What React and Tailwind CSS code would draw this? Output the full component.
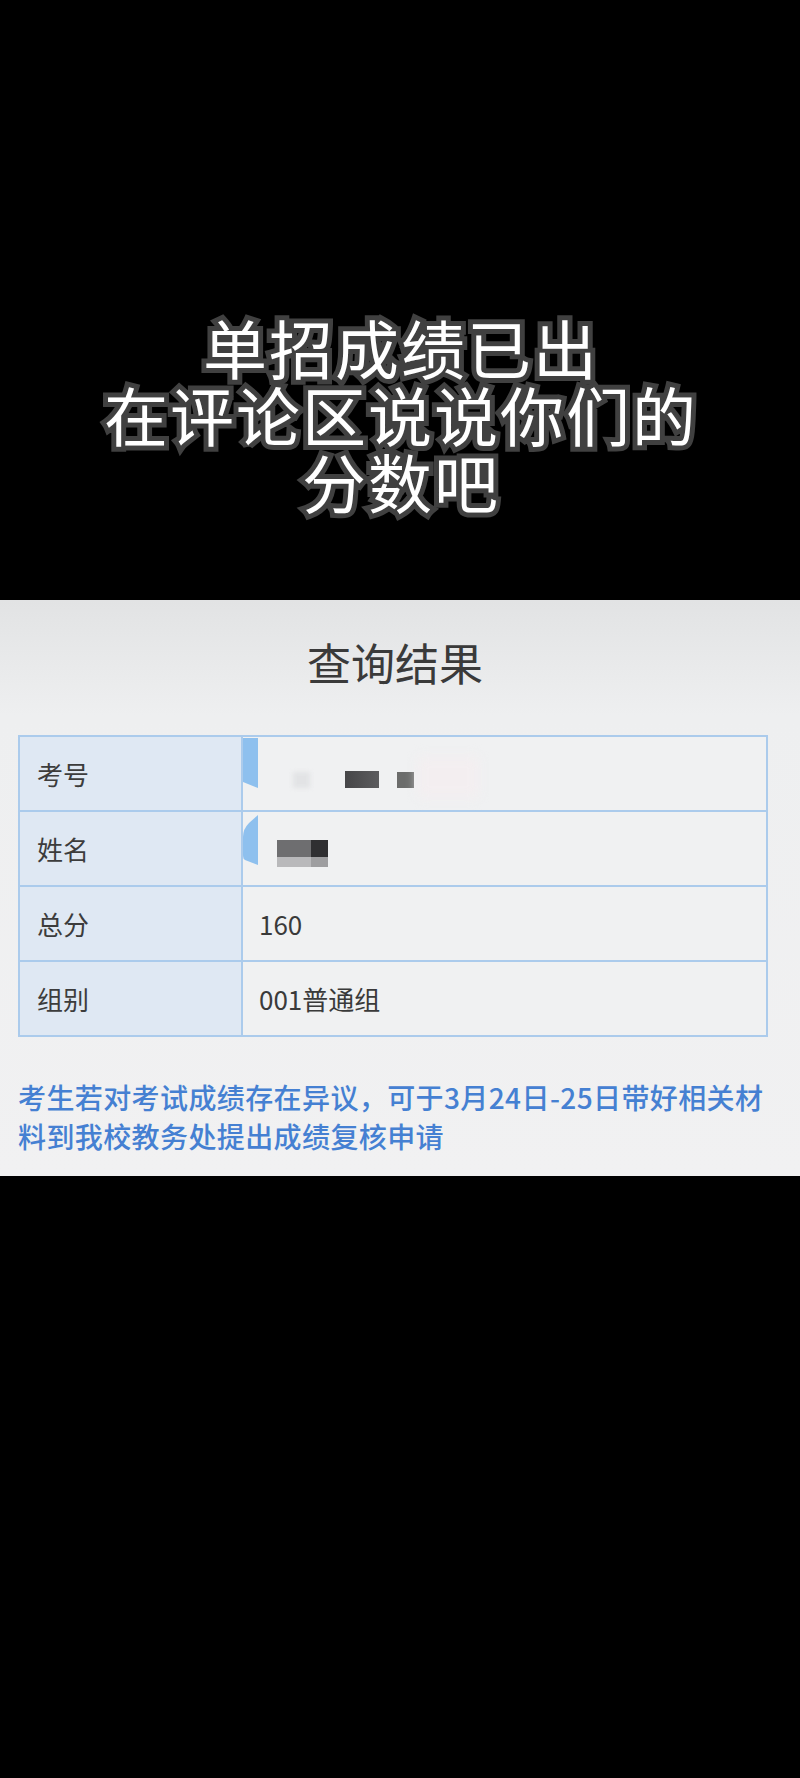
import React from 'react';

const rows = [
  { label: '考号', kind: 'id' },
  { label: '姓名', kind: 'name' },
  { label: '总分', value: '160' },
  { label: '组别', value: '001普通组' },
];

// blurred redaction blocks + the blue tab that sits on the cell's left edge
const Redacted = ({ kind }) => {
  if (kind === 'id') {
    return (
      <>
        <svg className="absolute left-0 top-[1px]" width="16" height="52" viewBox="0 0 16 52">
          <path d="M0 0 H15 V50 L0 44 Z" fill="#8ec0ee" />
        </svg>
        <div className="absolute left-[50px] top-[35px] w-[17px] h-[16px] bg-[#e2e3e5] blur-[2px]" />
        <div className="absolute left-[102px] top-[34px] w-[34px] h-[17px] bg-gradient-to-r from-[#464648] to-[#5c5c5e] blur-[0.5px]" />
        <div className="absolute left-[154px] top-[35px] w-[17px] h-[16px] bg-[#6b6c6b] blur-[0.5px]" />
        <div className="absolute left-[175px] top-[20px] w-[60px] h-[40px] bg-[#f3eef0] blur-[6px]" />
      </>
    );
  }
  return (
    <>
      <svg className="absolute left-0 top-[3px]" width="16" height="50" viewBox="0 0 16 50">
        <path d="M15 0 V50 L2 45 Q0 44 0 40 V22 Q0 14 6 8 Z" fill="#8ec0ee" />
      </svg>
      <div className="absolute left-[34px] top-[28px] flex flex-col blur-[0.5px]">
        <div className="flex">
          <div className="w-[34px] h-[17px] bg-[#6e6e70]" />
          <div className="w-[17px] h-[17px] bg-[#2f2f31]" />
        </div>
        <div className="flex">
          <div className="w-[34px] h-[10px] bg-[#b9b9bb]" />
          <div className="w-[17px] h-[10px] bg-[#9e9ea0]" />
        </div>
      </div>
    </>
  );
};

const App = () => {
  return (
    <div className="w-[800px] h-[1778px] bg-black font-['Noto_Sans_CJK_SC','Noto_Sans',sans-serif]">
      {/* caption over the black video area */}
      <div className="h-[600px] pt-[313px] flex flex-col items-center">
        {['单招成绩已出', '在评论区说说你们的', '分数吧'].map((line) => (
          <div
            key={line}
            className="text-white text-[64px] leading-[67px] font-normal tracking-[2px] pl-[2px] [paint-order:stroke_fill] [-webkit-text-stroke:10px_#404040]"
          >
            {line}
          </div>
        ))}
      </div>

      {/* screenshot of the result page */}
      <div className="h-[576px] bg-gradient-to-b from-[#e2e3e4] via-[#eeeff0] via-[20%] to-[#f1f1f2] px-[18px] pt-[40px]">
        <h1 className="text-center text-[44px] leading-[44px] text-[#3a3a3a] pr-[10px]">查询结果</h1>

        <div className="mt-[51px] w-[750px] border-t-2 border-x-2 border-[#abcbec]">
          {rows.map((r) => (
            <div key={r.label} className="grid grid-cols-[223px_1fr] h-[75px] border-b-2 border-[#abcbec]">
              <div className="bg-[#dfe8f3] border-r-2 border-[#abcbec] flex items-center pl-[17px] text-[26px] text-[#3c3c3c]">
                {r.label}
              </div>
              <div className="relative bg-[#f0f1f2] flex items-center pl-[16px] text-[26px] text-[#3a3a3a]">
                {r.kind ? <Redacted kind={r.kind} /> : r.value}
              </div>
            </div>
          ))}
        </div>

        <p className="mt-[41px] text-[28px] leading-[39px] font-medium text-[#4580d2] tracking-[0.4px]">
          考生若对考试成绩存在异议，可于3月24日-25日带好相关材
          <br />
          料到我校教务处提出成绩复核申请
        </p>
      </div>
    </div>
  );
};

export default App;
